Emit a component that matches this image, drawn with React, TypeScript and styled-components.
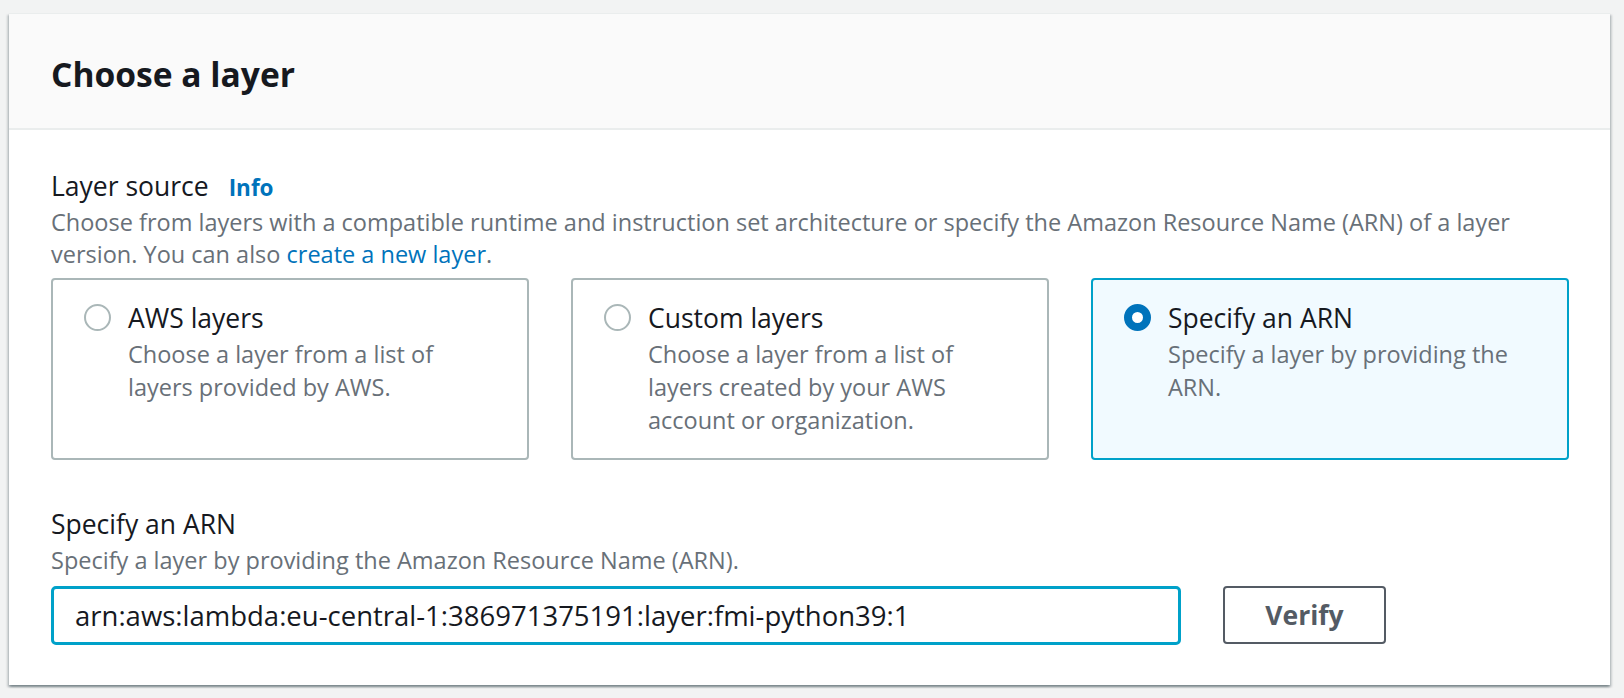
import React from "react";
import styled, { createGlobalStyle } from "styled-components";

const GlobalStyle = createGlobalStyle`
  html, body {
    margin: 0;
    padding: 0;
    background: #f2f3f3;
  }
  body {
    font-family: "Open Sans", "Noto Sans", Arial, sans-serif;
    color: #16191f;
    -webkit-font-smoothing: antialiased;
  }
  * { box-sizing: border-box; }
`;

const Page = styled.div`
  padding: 13px 14px 12px 9px;
`;

const Container = styled.section`
  background: #ffffff;
  border-top: 1px solid #eaeded;
  box-shadow: 0 2px 2px 0 rgba(0, 28, 36, 0.3), 2px 2px 2px 0 rgba(0, 28, 36, 0.15),
    -2px 2px 2px 0 rgba(0, 28, 36, 0.15);
`;

const Header = styled.header`
  background: #fafafa;
  border-bottom: 2px solid #eaeded;
  padding: 40px 42px 34px;
`;

const Title = styled.h2`
  margin: 0;
  font-size: 33.6px;
  line-height: 40px;
  font-weight: 700;
  color: #16191f;
`;

const Body = styled.div`
  padding: 39px 41px 40px 42px;
`;

const Field = styled.div<{ $spaced?: boolean }>`
  margin-top: ${(p) => (p.$spaced ? "47px" : "0")};
`;

const LabelRow = styled.div`
  display: flex;
  align-items: baseline;
  gap: 20px;
`;

const Label = styled.span`
  font-size: 26.5px;
  line-height: 34px;
  color: #16191f;
`;

const InfoLink = styled.a`
  font-size: 22.5px;
  font-weight: 700;
  color: #0073bb;
  text-decoration: none;
`;

const Description = styled.p`
  margin: 3px 0 0;
  font-size: 23.5px;
  line-height: 32px;
  color: #687078;
`;

const InlineLink = styled.a`
  color: #0073bb;
  text-decoration: none;
`;

const Tiles = styled.div`
  display: grid;
  grid-template-columns: repeat(3, 1fr);
  gap: 42px;
  margin-top: 8px;
`;

const Tile = styled.div<{ $selected?: boolean }>`
  display: flex;
  gap: 17px;
  padding: 21px 30px 21px 31px;
  border: 2px solid ${(p) => (p.$selected ? "#00a1c9" : "#aab7b8")};
  border-radius: 4px;
  background: ${(p) => (p.$selected ? "#f1faff" : "#ffffff")};
`;

const Radio = styled.span<{ $checked?: boolean }>`
  flex: none;
  width: 27px;
  height: 27px;
  margin-top: 3px;
  border-radius: 50%;
  background: #ffffff;
  border: ${(p) => (p.$checked ? "8.5px solid #0073bb" : "2.5px solid #aab7b8")};
`;

const TileText = styled.div`
  display: flex;
  flex-direction: column;
`;

const TileLabel = styled.span`
  font-size: 26.5px;
  line-height: 34px;
  color: #16191f;
`;

const TileDescription = styled.span`
  margin-top: 3px;
  font-size: 23.5px;
  line-height: 33px;
  color: #687078;
`;

const InputRow = styled.div`
  display: flex;
  align-items: flex-start;
  gap: 42px;
  margin-top: 10px;
`;

const TextInput = styled.input`
  width: 1130px;
  height: 59px;
  padding: 0 19px 0 21px;
  border: 3px solid #00a1c9;
  border-radius: 5px;
  background: #ffffff;
  font-family: "Open Sans", "Noto Sans", Arial, sans-serif;
  font-size: 27.5px;
  line-height: 34px;
  color: #16191f;
  outline: none;
`;

const Button = styled.button`
  width: 163px;
  height: 58px;
  border: 2px solid #545b64;
  border-radius: 4px;
  background: #ffffff;
  font-family: "Open Sans", "Noto Sans", Arial, sans-serif;
  font-size: 26.5px;
  font-weight: 700;
  color: #545b64;
  cursor: pointer;
`;

type Option = { id: string; label: string; description: string };

const options: Option[] = [
  { id: "aws", label: "AWS layers", description: "Choose a layer from a list of layers provided by AWS." },
  {
    id: "custom",
    label: "Custom layers",
    description: "Choose a layer from a list of layers created by your AWS account or organization.",
  },
  { id: "arn", label: "Specify an ARN", description: "Specify a layer by providing the ARN." },
];

export default function App() {
  const selected = "arn";
  return (
    <>
      <GlobalStyle />
      <Page>
        <Container>
          <Header>
            <Title>Choose a layer</Title>
          </Header>
          <Body>
            <Field>
              <LabelRow>
                <Label>Layer source</Label>
                <InfoLink href="#">Info</InfoLink>
              </LabelRow>
              <Description>
                Choose from layers with a compatible runtime and instruction set architecture or specify the
                Amazon Resource Name (ARN) of a layer version. You can also{" "}
                <InlineLink href="#">create a new layer</InlineLink>.
              </Description>
              <Tiles>
                {options.map((o) => (
                  <Tile key={o.id} $selected={o.id === selected}>
                    <Radio $checked={o.id === selected} />
                    <TileText>
                      <TileLabel>{o.label}</TileLabel>
                      <TileDescription>{o.description}</TileDescription>
                    </TileText>
                  </Tile>
                ))}
              </Tiles>
            </Field>
            <Field $spaced>
              <Label>Specify an ARN</Label>
              <Description>Specify a layer by providing the Amazon Resource Name (ARN).</Description>
              <InputRow>
                <TextInput readOnly value="arn:aws:lambda:eu-central-1:386971375191:layer:fmi-python39:1" />
                <Button>Verify</Button>
              </InputRow>
            </Field>
          </Body>
        </Container>
      </Page>
    </>
  );
}
